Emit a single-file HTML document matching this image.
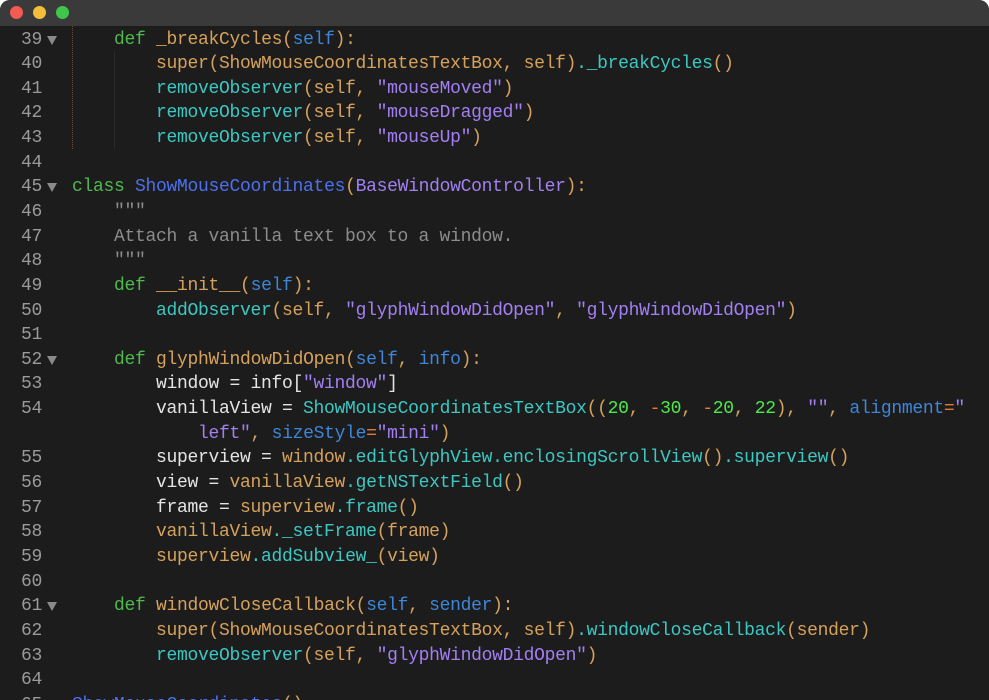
<!DOCTYPE html>
<html><head><meta charset="utf-8"><style>
html,body{margin:0;padding:0;background:#fff;width:989px;height:700px;overflow:hidden}
.win{position:absolute;left:0;top:0;width:989px;height:700px;background:#1c1c1c;border-radius:10px 10px 0 0;overflow:hidden}
.tb{height:26px;background:#3a3a3a;position:relative}
.dot{position:absolute;top:6px;width:13px;height:13px;border-radius:50%}
.code{position:absolute;top:27.5px;left:0;width:989px;font-family:"Liberation Mono",monospace;font-size:18px;letter-spacing:-0.3px;line-height:24.65px;color:#e4e4e4}
.row{position:relative;height:24.65px}
.ln{position:absolute;left:0;width:42px;text-align:right;color:#9a9a9a}
.tri{position:absolute;left:47px;top:8px;width:0;height:0;border-left:5.5px solid transparent;border-right:5.5px solid transparent;border-top:9px solid #8a8a8a}
.tx{position:absolute;left:72px;white-space:pre}
.k{color:#4fb84f}.f{color:#d6a15b}.s{color:#3d86d8}.m{color:#3cc8c2}.q{color:#a27ff2}.n{color:#4fe84f}.c{color:#4d70f0}.g{color:#8c8c8c}.o{color:#e07a3a}
.guide{position:absolute;left:72px;top:26px;height:123px;border-left:1px dotted #6a4a3a}
.guide2{position:absolute;left:114px;top:51px;height:98px;border-left:1px solid #2a2a2a}
</style></head><body><div class="win">
<div class="tb"><div class="dot" style="left:10px;background:#f25a52"></div><div class="dot" style="left:33px;background:#f4bd3a"></div><div class="dot" style="left:56px;background:#3fc64a"></div></div>
<div class="guide"></div><div class="guide2"></div>
<div class="code"><div class="row"><span class="ln">39</span><span class="tri"></span><span class="tx">    <span class="k">def</span> <span class="f">_breakCycles(</span><span class="s">self</span><span class="f">):</span></span></div><div class="row"><span class="ln">40</span><span class="tx">        <span class="f">super(ShowMouseCoordinatesTextBox, self)</span><span class="m">._breakCycles</span><span class="f">()</span></span></div><div class="row"><span class="ln">41</span><span class="tx">        <span class="m">removeObserver</span><span class="f">(self, </span><span class="q">"mouseMoved"</span><span class="f">)</span></span></div><div class="row"><span class="ln">42</span><span class="tx">        <span class="m">removeObserver</span><span class="f">(self, </span><span class="q">"mouseDragged"</span><span class="f">)</span></span></div><div class="row"><span class="ln">43</span><span class="tx">        <span class="m">removeObserver</span><span class="f">(self, </span><span class="q">"mouseUp"</span><span class="f">)</span></span></div><div class="row"><span class="ln">44</span></div><div class="row"><span class="ln">45</span><span class="tri"></span><span class="tx"><span class="k">class</span> <span class="c">ShowMouseCoordinates</span><span class="f">(</span><span class="q">BaseWindowController</span><span class="f">):</span></span></div><div class="row"><span class="ln">46</span><span class="tx g">    """</span></div><div class="row"><span class="ln">47</span><span class="tx g">    Attach a vanilla text box to a window.</span></div><div class="row"><span class="ln">48</span><span class="tx g">    """</span></div><div class="row"><span class="ln">49</span><span class="tx">    <span class="k">def</span> <span class="f">__init__(</span><span class="s">self</span><span class="f">):</span></span></div><div class="row"><span class="ln">50</span><span class="tx">        <span class="m">addObserver</span><span class="f">(self, </span><span class="q">"glyphWindowDidOpen"</span><span class="f">, </span><span class="q">"glyphWindowDidOpen"</span><span class="f">)</span></span></div><div class="row"><span class="ln">51</span></div><div class="row"><span class="ln">52</span><span class="tri"></span><span class="tx">    <span class="k">def</span> <span class="f">glyphWindowDidOpen(</span><span class="s">self</span><span class="f">, </span><span class="s">info</span><span class="f">):</span></span></div><div class="row"><span class="ln">53</span><span class="tx">        window = info[<span class="q">"window"</span>]</span></div><div class="row"><span class="ln">54</span><span class="tx">        vanillaView = <span class="m">ShowMouseCoordinatesTextBox</span><span class="f">((</span><span class="n">20</span><span class="f">, </span><span class="o">-</span><span class="n">30</span><span class="f">, </span><span class="o">-</span><span class="n">20</span><span class="f">, </span><span class="n">22</span><span class="f">), </span><span class="q">""</span><span class="f">, </span><span class="s">alignment</span><span class="o">=</span><span class="q">"</span></span></div><div class="row"><span class="tx">            <span class="q">left"</span><span class="f">, </span><span class="s">sizeStyle</span><span class="o">=</span><span class="q">"mini"</span><span class="f">)</span></span></div><div class="row"><span class="ln">55</span><span class="tx">        superview = <span class="f">window</span><span class="m">.editGlyphView.enclosingScrollView</span><span class="f">()</span><span class="m">.superview</span><span class="f">()</span></span></div><div class="row"><span class="ln">56</span><span class="tx">        view = <span class="f">vanillaView</span><span class="m">.getNSTextField</span><span class="f">()</span></span></div><div class="row"><span class="ln">57</span><span class="tx">        frame = <span class="f">superview</span><span class="m">.frame</span><span class="f">()</span></span></div><div class="row"><span class="ln">58</span><span class="tx">        <span class="f">vanillaView</span><span class="m">._setFrame</span><span class="f">(frame)</span></span></div><div class="row"><span class="ln">59</span><span class="tx">        <span class="f">superview</span><span class="m">.addSubview_</span><span class="f">(view)</span></span></div><div class="row"><span class="ln">60</span></div><div class="row"><span class="ln">61</span><span class="tri"></span><span class="tx">    <span class="k">def</span> <span class="f">windowCloseCallback(</span><span class="s">self</span><span class="f">, </span><span class="s">sender</span><span class="f">):</span></span></div><div class="row"><span class="ln">62</span><span class="tx">        <span class="f">super(ShowMouseCoordinatesTextBox, self)</span><span class="m">.windowCloseCallback</span><span class="f">(sender)</span></span></div><div class="row"><span class="ln">63</span><span class="tx">        <span class="m">removeObserver</span><span class="f">(self, </span><span class="q">"glyphWindowDidOpen"</span><span class="f">)</span></span></div><div class="row"><span class="ln">64</span></div><div class="row"><span class="ln">65</span><span class="tx"><span class="c">ShowMouseCoordinates</span><span class="f">()</span></span></div></div></div></body></html>
